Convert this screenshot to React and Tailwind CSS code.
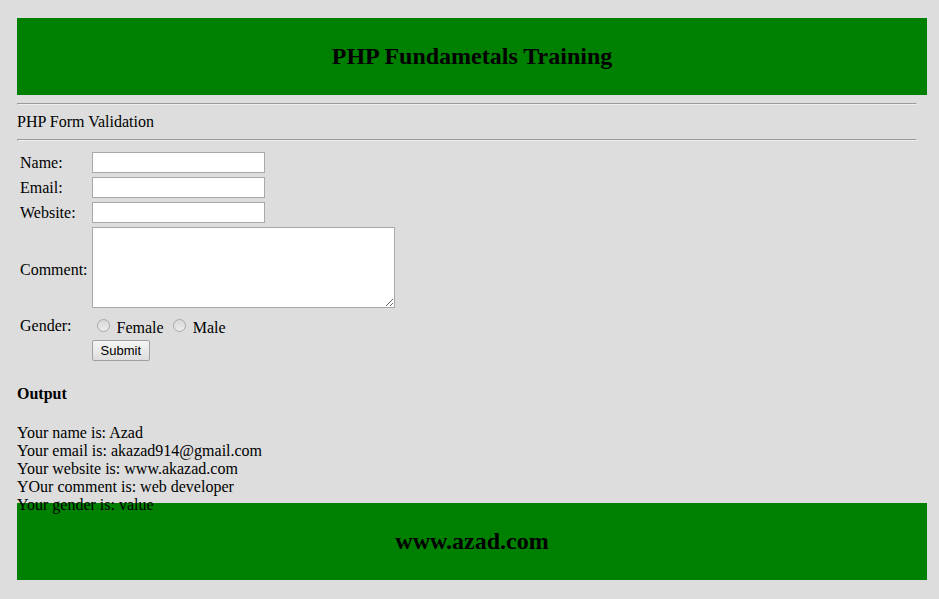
const inputClass =
  'block h-[21px] w-[173px] border border-[#a9a9a9] bg-white px-px text-[13px] outline-none';

function Banner({ as: Tag, className, children }) {
  return (
    <Tag className={`bg-[#008000] py-[25px] text-center text-2xl leading-[27px] font-bold ${className}`}>
      <h2>{children}</h2>
    </Tag>
  );
}

function Rule() {
  return <hr className="mr-2.5 h-0.5 border border-t-[#9a9a9a] border-r-[#eeeeee] border-b-[#eeeeee] border-l-[#9a9a9a]" />;
}

function Gender({ id, children }) {
  return (
    <span className="flex items-center gap-[7px]">
      <input
        id={id}
        type="radio"
        name="gender"
        className="ml-[5px] size-[13px] appearance-none rounded-full border border-[#a8a8a8] bg-linear-to-b from-[#d8d8d8] to-[#ececec] checked:border-4 checked:border-[#555555]"
      />
      <label htmlFor={id} className="pt-1.5">{children}</label>
    </span>
  );
}

const fields = [
  { id: 'name', label: 'Name:' },
  { id: 'email', label: 'Email:' },
  { id: 'website', label: 'Website:' },
];

export default function App() {
  return (
    <div className="min-h-screen bg-[#dddddd] pt-[18px] pr-3 pb-[19px] pl-[17px] font-['Liberation_Serif','Times_New_Roman',serif] text-base leading-[18px] text-black">
      <Banner as="header" className="mb-2">PHP Fundametals Training</Banner>
      <main>
        <Rule />
        <p className="my-2">PHP Form Validation</p>
        <Rule />
        <form className="mt-2" onSubmit={(e) => e.preventDefault()}>
          <table className="border-separate border-spacing-0.5">
            <tbody>
              {fields.map((f) => (
                <tr key={f.id}>
                  <td className="p-px"><label htmlFor={f.id}>{f.label}</label></td>
                  <td className="p-px"><input id={f.id} name={f.id} type="text" className={inputClass} /></td>
                </tr>
              ))}
              <tr>
                <td className="p-px"><label htmlFor="comment">Comment:</label></td>
                <td className="p-px pb-[5px]">
                  <textarea id="comment" name="comment" className="block h-[81px] w-[303px] resize border border-[#a9a9a9] bg-white p-0.5 text-[13px] outline-none" />
                </td>
              </tr>
              <tr>
                <td className="p-px" id="gender-label">Gender:</td>
                <td className="p-px">
                  <div role="radiogroup" aria-labelledby="gender-label" className="flex h-5 items-center gap-1 pb-0.5">
                    <Gender id="female">Female</Gender>
                    <Gender id="male">Male</Gender>
                  </div>
                </td>
              </tr>
              <tr>
                <td className="p-px" />
                <td className="p-px">
                  <button
                    type="submit"
                    className="block h-[21px] rounded-xs border border-[#a0a0a0] bg-linear-to-b from-[#f6f6f6] to-[#dddddd] px-2 font-['Liberation_Sans',Arial,sans-serif] text-[13px] leading-[19px]"
                  >
                    Submit
                  </button>
                </td>
              </tr>
            </tbody>
          </table>
        </form>
        <h4 className="my-[21px] font-bold">Output</h4>
        <p>
          Your name is: Azad<br />
          Your email is: akazad914@gmail.com<br />
          Your website is: www.akazad.com<br />
          YOur comment is: web developer<br />
          Your gender is: value
        </p>
      </main>
      <Banner as="footer" className="-mt-[11px]">www.azad.com</Banner>
    </div>
  );
}
